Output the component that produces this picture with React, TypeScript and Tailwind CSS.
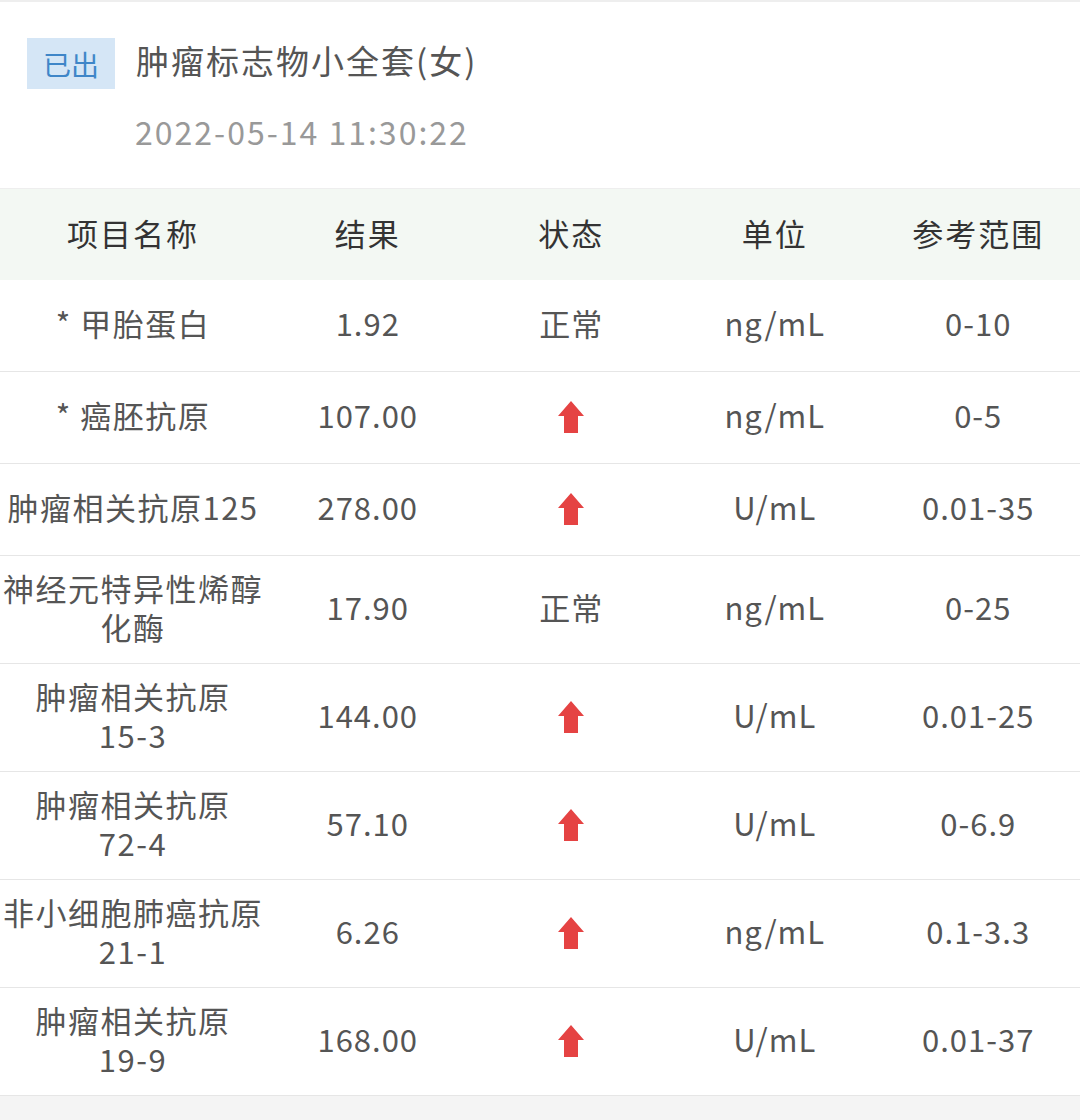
import React from "react";

type Row = {
  name: string[];
  value: string;
  high: boolean;
  unit: string;
  range: string;
};

const ROWS: Row[] = [
  { name: ["* 甲胎蛋白"], value: "1.92", high: false, unit: "ng/mL", range: "0-10" },
  { name: ["* 癌胚抗原"], value: "107.00", high: true, unit: "ng/mL", range: "0-5" },
  { name: ["肿瘤相关抗原125"], value: "278.00", high: true, unit: "U/mL", range: "0.01-35" },
  { name: ["神经元特异性烯醇", "化酶"], value: "17.90", high: false, unit: "ng/mL", range: "0-25" },
  { name: ["肿瘤相关抗原", "15-3"], value: "144.00", high: true, unit: "U/mL", range: "0.01-25" },
  { name: ["肿瘤相关抗原", "72-4"], value: "57.10", high: true, unit: "U/mL", range: "0-6.9" },
  { name: ["非小细胞肺癌抗原", "21-1"], value: "6.26", high: true, unit: "ng/mL", range: "0.1-3.3" },
  { name: ["肿瘤相关抗原", "19-9"], value: "168.00", high: true, unit: "U/mL", range: "0.01-37" },
];

const HEADERS = ["项目名称", "结果", "状态", "单位", "参考范围"];

function UpArrow() {
  return (
    <svg width="26" height="32" viewBox="0 0 26 32" aria-hidden>
      <path d="M13 0 L26 15 L20 15 L20 32 L6 32 L6 15 L0 15 Z" fill="#e54343" />
    </svg>
  );
}

export default function App() {
  return (
    <div
      className="min-h-[1120px] bg-[#f4f4f4] border-t-2 border-[#eeeeee]"
      style={{ fontFamily: '"Noto Sans CJK SC", "Noto Sans", sans-serif' }}
    >
      <div className="bg-white">
        <div className="pl-[27px] pt-[36px] pb-[39px]">
          <div className="flex items-center gap-[21px]">
            <span className="w-[88px] h-[51px] flex items-center justify-center bg-[#d5e6f6] text-[#3f86c8] text-[28px]">
              已出
            </span>
            <span className="-mt-[6px] text-[33px] text-[#555] tracking-[2px]">
              肿瘤标志物小全套(女)
            </span>
          </div>
          <div className="mt-[24px] pl-[108px] text-[32px] leading-[36px] text-[#999] tracking-[2px]">
            2022-05-14 11:30:22
          </div>
        </div>

        <div className="grid grid-cols-[266px_1fr_1fr_1fr_1fr] h-[92px] items-center pb-[3px] bg-[#f3f8f3] border-t border-[#eeeeee] text-[31px] text-[#333] tracking-[2px]">
          {HEADERS.map((h) => (
            <div key={h} className="text-center">
              {h}
            </div>
          ))}
        </div>

        {ROWS.map((r, i) => (
          <div
            key={i}
            className="grid grid-cols-[266px_1fr_1fr_1fr_1fr] items-center min-h-[92px] pt-[13px] pb-[17px] border-b border-[#e6e6e6] text-[31px] leading-[38.5px] text-[#555] tracking-[1px]"
          >
            <div className="text-center whitespace-nowrap tracking-[1.5px]">
              {r.name.map((line) => (
                <div key={line}>{line}</div>
              ))}
            </div>
            <div className="text-center">{r.value}</div>
            <div className="flex justify-center pt-[3px]">
              {r.high ? <UpArrow /> : <span className="-mt-[3px]">正常</span>}
            </div>
            <div className="text-center">{r.unit}</div>
            <div className="text-center">{r.range}</div>
          </div>
        ))}
      </div>
    </div>
  );
}
